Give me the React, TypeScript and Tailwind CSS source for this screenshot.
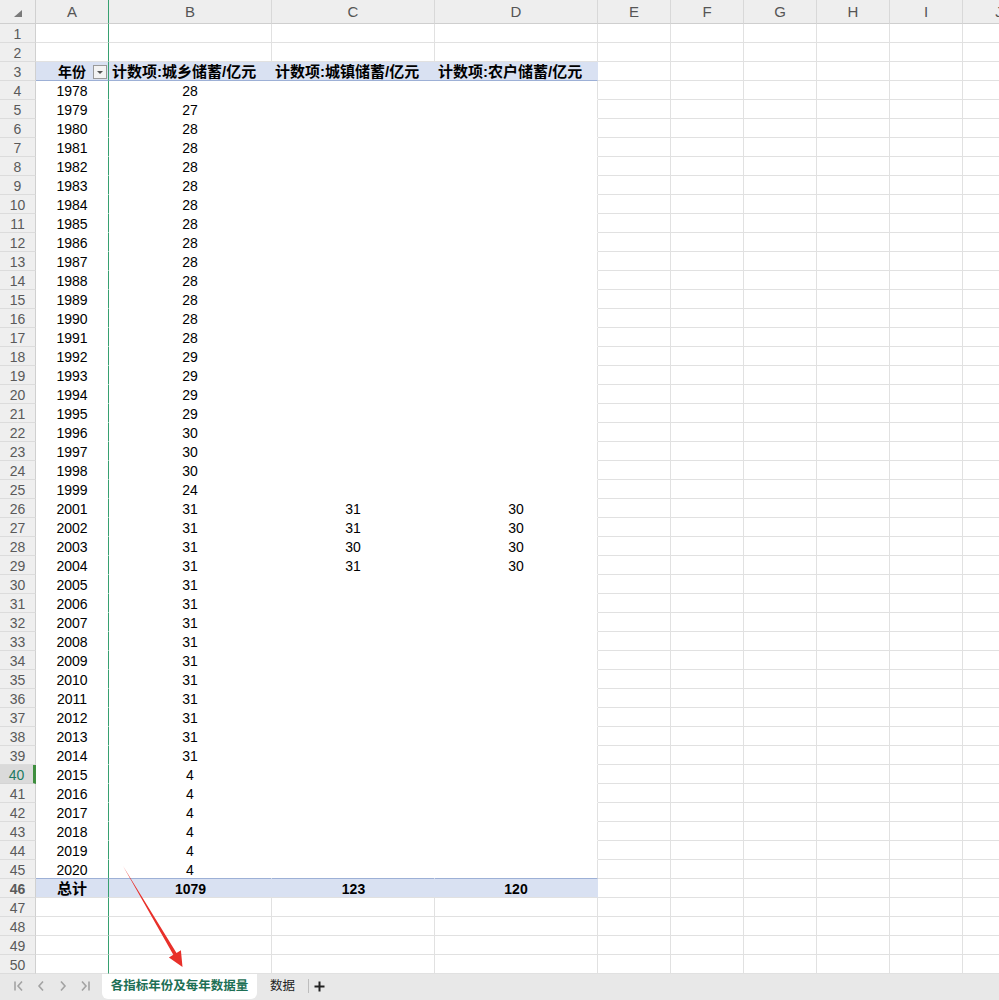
import React from 'react';

const FONT = { fontFamily: '"Liberation Sans", "Noto Sans CJK SC", sans-serif' };

const restCols = ['E', 'F', 'G', 'H', 'I', 'J'];

type DataRow = { year: string; b: string; c?: string; d?: string };

function buildData(): DataRow[] {
  const rows: DataRow[] = [];
  const bFor = (y: number) => {
    if (y === 1979) return '27';
    if (y <= 1991) return '28';
    if (y <= 1995) return '29';
    if (y <= 1998) return '30';
    if (y === 1999) return '24';
    if (y <= 2014) return '31';
    return '4';
  };
  const cMap: Record<number, string> = { 2001: '31', 2002: '31', 2003: '30', 2004: '31' };
  for (let y = 1978; y <= 2020; y++) {
    if (y === 2000) continue;
    rows.push({ year: String(y), b: bFor(y), c: cMap[y], d: cMap[y] ? '30' : undefined });
  }
  return rows;
}

function RowHeader({ n }: { n: number }) {
  if (n === 40) {
    return (
      <div className="w-[36px] h-[19px] shrink-0 flex items-center justify-center pt-[2px] bg-[#dadada] border-r-[3px] border-r-[#3f8f3f] border-b border-b-[#d4d4d4] text-[14px] text-[#217a62]">
        {n}
      </div>
    );
  }
  return (
    <div className="w-[36px] h-[19px] shrink-0 flex items-center justify-center pt-[2px] bg-[#efefef] border-r border-r-[#d0d0d0] border-b border-b-[#dcdcdc] text-[14px] text-[#5a5a5a]">
      {n}
    </div>
  );
}

function RestCells() {
  return (
    <>
      {restCols.map((c) => (
        <div key={c} className="w-[73px] h-[19px] shrink-0 border-r border-b border-[#e1e1e1]" />
      ))}
    </>
  );
}

function PlainRow({ n }: { n: number }) {
  return (
    <div className="flex h-[19px]">
      <RowHeader n={n} />
      <div className="w-[73px] h-[19px] shrink-0 border-r border-r-[#36a070] border-b border-b-[#e1e1e1]" />
      <div className="w-[163px] h-[19px] shrink-0 border-r border-b border-[#e1e1e1]" />
      <div className="w-[163px] h-[19px] shrink-0 border-r border-b border-[#e1e1e1]" />
      <div className="w-[163px] h-[19px] shrink-0 border-r border-b border-[#e1e1e1]" />
      <RestCells />
    </div>
  );
}

function FilterButton() {
  return (
    <div className="absolute right-[1px] top-[3px] w-[14px] h-[14px] bg-[#f3f3f3] border border-[#9a9a9a] flex items-center justify-center">
      <svg width="8" height="5" viewBox="0 0 8 5">
        <polygon points="1,1 7,1 4,4" fill="#555" />
      </svg>
    </div>
  );
}

function HeaderRow() {
  return (
    <div className="flex h-[19px]">
      <RowHeader n={3} />
      <div className="relative w-[73px] h-[19px] shrink-0 bg-[#d9e1f2] border-r border-r-[#36a070] border-b border-b-[#9db0d6] flex items-center justify-center pt-[2px] font-bold text-[14px] text-black">
        年份
        <FilterButton />
      </div>
      <div className="w-[163px] h-[19px] shrink-0 bg-[#d9e1f2] border-b border-b-[#9db0d6] flex items-center pl-[3px] pt-[2px] font-bold text-[15px] text-black whitespace-nowrap">
        计数项:城乡储蓄/亿元
      </div>
      <div className="w-[163px] h-[19px] shrink-0 bg-[#d9e1f2] border-b border-b-[#9db0d6] flex items-center pl-[3px] pt-[2px] font-bold text-[15px] text-black whitespace-nowrap">
        计数项:城镇储蓄/亿元
      </div>
      <div className="w-[163px] h-[19px] shrink-0 bg-[#d9e1f2] border-r border-r-[#d9e1f2] border-b border-b-[#9db0d6] flex items-center pl-[3px] pt-[2px] font-bold text-[15px] text-black whitespace-nowrap">
        计数项:农户储蓄/亿元
      </div>
      <RestCells />
    </div>
  );
}

function BodyRow({ n, row, last }: { n: number; row: DataRow; last: boolean }) {
  const bb = last ? 'border-b border-b-[#9db0d6]' : 'border-b border-b-white';
  return (
    <div className="flex h-[19px] text-[14px] text-black">
      <RowHeader n={n} />
      <div className={`w-[73px] h-[19px] shrink-0 border-r border-r-[#36a070] ${bb} flex items-center justify-center pt-[2px]`}>
        {row.year}
      </div>
      <div className={`w-[163px] h-[19px] shrink-0 border-r border-r-white ${bb} flex items-center justify-center pt-[2px]`}>
        {row.b}
      </div>
      <div className={`w-[163px] h-[19px] shrink-0 border-r border-r-white ${bb} flex items-center justify-center pt-[2px]`}>
        {row.c}
      </div>
      <div className={`w-[163px] h-[19px] shrink-0 border-r border-r-[#e1e1e1] ${bb} flex items-center justify-center pt-[2px]`}>
        {row.d}
      </div>
      <RestCells />
    </div>
  );
}

function TotalRow() {
  return (
    <div className="flex h-[19px] text-[14px] font-bold text-black">
      <RowHeader n={46} />
      <div className="w-[73px] h-[19px] shrink-0 bg-[#d9e1f2] border-r border-r-[#36a070] border-b border-b-[#e1e1e1] flex items-center justify-center pt-[2px] text-[15px]">
        总计
      </div>
      <div className="w-[163px] h-[19px] shrink-0 bg-[#d9e1f2] border-b border-b-[#e1e1e1] flex items-center justify-center pt-[2px]">
        1079
      </div>
      <div className="w-[163px] h-[19px] shrink-0 bg-[#d9e1f2] border-b border-b-[#e1e1e1] flex items-center justify-center pt-[2px]">
        123
      </div>
      <div className="w-[163px] h-[19px] shrink-0 bg-[#d9e1f2] border-r border-r-[#d9e1f2] border-b border-b-[#e1e1e1] flex items-center justify-center pt-[2px]">
        120
      </div>
      <RestCells />
    </div>
  );
}

function ColumnHeaders() {
  const cell = 'h-[24px] shrink-0 flex items-center justify-center pt-[2px] border-r border-r-[#d8d8d8] border-b border-b-[#cfcfcf] bg-[#eeeeee] text-[15px] text-[#555]';
  return (
    <div className="flex h-[24px]">
      <div className="w-[36px] h-[24px] shrink-0 bg-[#eeeeee] border-r border-r-[#d0d0d0] border-b border-b-[#cfcfcf] flex items-end justify-end pr-[13px] pb-[6px]">
        <svg width="8" height="7" viewBox="0 0 8 7">
          <polygon points="8,0 8,7 0,7" fill="#7a7a7a" />
        </svg>
      </div>
      <div className="w-[73px] h-[24px] shrink-0 flex items-center justify-center pt-[2px] border-r border-r-[#36a070] border-b border-b-[#cfcfcf] bg-[#eeeeee] text-[15px] text-[#555]">
        A
      </div>
      <div className={`w-[163px] ${cell}`}>B</div>
      <div className={`w-[163px] ${cell}`}>C</div>
      <div className={`w-[163px] ${cell}`}>D</div>
      {restCols.map((c) => (
        <div key={c} className={`w-[73px] ${cell}`}>
          {c}
        </div>
      ))}
    </div>
  );
}

function NavIcon({ kind }: { kind: 'first' | 'prev' | 'next' | 'last' }) {
  return (
    <svg width="12" height="12" viewBox="0 0 12 12" fill="none" stroke="#a3a3a3" strokeWidth="1.6">
      {kind === 'first' && (
        <>
          <line x1="2" y1="1.5" x2="2" y2="10.5" />
          <polyline points="9,1.5 5,6 9,10.5" />
        </>
      )}
      {kind === 'prev' && <polyline points="8,1.5 4,6 8,10.5" />}
      {kind === 'next' && <polyline points="4,1.5 8,6 4,10.5" />}
      {kind === 'last' && (
        <>
          <polyline points="3,1.5 7,6 3,10.5" />
          <line x1="10" y1="1.5" x2="10" y2="10.5" />
        </>
      )}
    </svg>
  );
}

function TabBar() {
  return (
    <div className="flex h-[26px] bg-[#e8e8e8] items-start">
      <div className="w-[102px] h-[24px] flex items-center pl-[13px] gap-[10px]">
        <NavIcon kind="first" />
        <NavIcon kind="prev" />
        <NavIcon kind="next" />
        <NavIcon kind="last" />
      </div>
      <div className="w-[155px] h-[25px] bg-white rounded-b-[6px] flex items-center justify-center text-[12.5px] font-bold text-[#1d6f55]">
        各指标年份及每年数据量
      </div>
      <div className="h-[24px] flex items-center px-[13px] text-[12.5px] text-[#222]">数据</div>
      <div className="w-px h-[14px] bg-[#bdbdbd] mt-[5px]" />
      <div className="h-[24px] flex items-center pl-[5px]">
        <svg width="11" height="11" viewBox="0 0 11 11" stroke="#222" strokeWidth="2">
          <line x1="5.5" y1="0.5" x2="5.5" y2="10.5" />
          <line x1="0.5" y1="5.5" x2="10.5" y2="5.5" />
        </svg>
      </div>
    </div>
  );
}

export default function App() {
  const data = buildData();
  return (
    <div className="relative w-[999px] h-[1000px] overflow-hidden bg-white" style={FONT}>
      <ColumnHeaders />
      <PlainRow n={1} />
      <PlainRow n={2} />
      <HeaderRow />
      {data.map((row, i) => (
        <BodyRow key={row.year} n={i + 4} row={row} last={i === data.length - 1} />
      ))}
      <TotalRow />
      {[47, 48, 49, 50].map((n) => (
        <PlainRow key={n} n={n} />
      ))}
      <TabBar />
      <svg className="absolute left-0 top-0 pointer-events-none" width="999" height="1000">
        <polygon
          points="123,866 176.5,953 180.9,950.3 182.5,967 168.9,957.5 173.3,954.8"
          fill="#e8302a"
        />
      </svg>
    </div>
  );
}
